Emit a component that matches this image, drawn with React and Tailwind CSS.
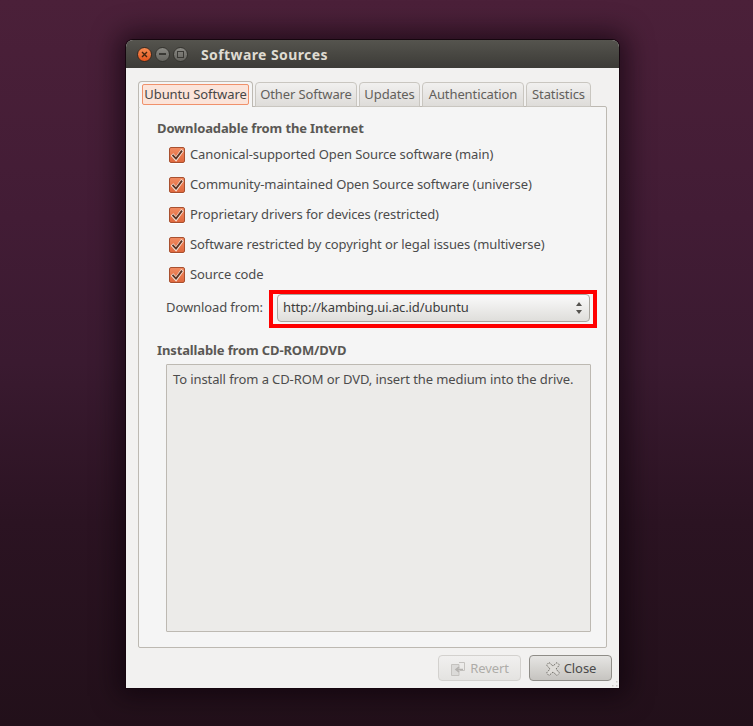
const sources = [
  'Canonical-supported Open Source software (main)',
  'Community-maintained Open Source software (universe)',
  'Proprietary drivers for devices (restricted)',
  'Software restricted by copyright or legal issues (multiverse)',
  'Source code',
];

const tabs = [
  { label: 'Other Software', width: 'w-[102px]' },
  { label: 'Updates', width: 'w-[61px]' },
  { label: 'Authentication', width: 'w-[102px]' },
  { label: 'Statistics', width: 'w-[65px]' },
];

const CheckBox = () => (
  <div className="flex h-[16px] w-[16px] shrink-0 items-center justify-center rounded-[2px] border border-[#a8502f] bg-gradient-to-b from-[#f08a60] to-[#e0693f] shadow-[0_1px_0_#ffffff]">
    <svg width="14" height="14" viewBox="0 0 14 14" fill="none">
      <path d="M2 6.5 L6 11 L12.5 2" stroke="#f6e4da" strokeWidth="3.4" />
      <path d="M2.5 6.8 L6 10.6 L12 2.6" stroke="#5c3424" strokeWidth="1.8" />
    </svg>
  </div>
);

const WindowButtons = () => (
  <div className="flex w-[75px] items-center pl-[11px]">
    <div className="flex h-[15px] w-[15px] items-center justify-center rounded-full border border-[#3a2a20] bg-gradient-to-b from-[#f58a50] to-[#e6551b]">
      <svg width="9" height="9" viewBox="0 0 9 9"><path d="M2 2 L7 7 M7 2 L2 7" stroke="#43250f" strokeWidth="1.4" /></svg>
    </div>
    <div className="ml-[3px] flex h-[15px] w-[15px] items-center justify-center rounded-full border border-[#35342f] bg-gradient-to-b from-[#8a8984] to-[#65645f]">
      <div className="h-[2px] w-[7px] bg-[#3a3935]" />
    </div>
    <div className="ml-[3px] flex h-[15px] w-[15px] items-center justify-center rounded-full border border-[#35342f] bg-gradient-to-b from-[#8a8984] to-[#65645f]">
      <div className="h-[7px] w-[7px] border border-[#3a3935]" />
    </div>
  </div>
);

const RevertIcon = () => (
  <svg width="17" height="16" viewBox="0 0 17 16" fill="none">
    <path d="M1.5 3.5 H9 V14.5 H1.5 Z" fill="#dbdad8" stroke="#c4c2bf" />
    <path d="M9 1.5 H14.5 V9.5 H10" stroke="#c4c2bf" />
    <path d="M13 8.5 H6.5 M9 6 L6 8.5 L9 11" stroke="#b4b2af" strokeWidth="1.6" />
  </svg>
);

const CloseIcon = () => (
  <svg width="16" height="16" viewBox="0 0 16 16">
    <path
      d="M4 1.5 L8 5 L12 1.5 L14.5 4 L11 8 L14.5 12 L12 14.5 L8 11 L4 14.5 L1.5 12 L5 8 L1.5 4 Z"
      fill="#dedcd8"
      stroke="#77756f"
      strokeWidth="1"
      strokeDasharray="2 1"
    />
  </svg>
);

const ResizeGrip = () => (
  <svg className="absolute bottom-[-7px] right-[-7px]" width="8" height="8" viewBox="0 0 8 8" fill="#cfccc7">
    <rect x="5" y="1" width="1.5" height="1.5" />
    <rect x="1" y="5" width="1.5" height="1.5" />
    <rect x="5" y="5" width="1.5" height="1.5" />
  </svg>
);

const App = () => {
  return (
    <div
      className="h-[726px] w-[753px] overflow-hidden bg-[linear-gradient(180deg,#4b2039_0%,#421c35_30%,#3a1a30_50%,#2b1322_72%,#22101a_100%)] pl-[126px] pt-[40px] text-[13px] tracking-[-0.1px] text-[#4c4c4c]"
      style={{ fontFamily: '"Noto Sans", sans-serif' }}
    >
      <div className="flex h-[648px] w-[493px] flex-col overflow-hidden rounded-t-[7px] bg-[#f2f1f0] shadow-[0_0_0_1px_#16060f,0_0_26px_8px_rgba(10,0,8,0.6)]">
        {/* Title bar */}
        <div className="flex h-[28px] shrink-0 items-center bg-gradient-to-b from-[#55544e] to-[#3c3b37]">
          <WindowButtons />
          <span className="text-[14px] font-bold tracking-[0.4px] text-[#dfdbd2]">Software Sources</span>
        </div>

        <div className="flex flex-1 flex-col px-[12px] pt-[13px]">
          {/* Tabs */}
          <div className="relative z-10 -mb-px flex h-[26px] items-end gap-[2px]">
            <div className="flex h-[26px] w-[115px] items-center justify-center rounded-t-[4px] border border-b-0 border-[#bdb9b2] bg-[#f5f5f5]">
              <div className="flex h-[21px] w-[107px] items-center justify-center rounded-[2px] border border-[#f0916b] bg-[#fbe4da] text-[#474747]">
                Ubuntu Software
              </div>
            </div>
            {tabs.map((tab) => (
              <div
                key={tab.label}
                className={`flex h-[25px] items-center justify-center rounded-t-[4px] border border-[#c9c6c0] bg-gradient-to-b from-[#f1f0ef] to-[#dedcd9] text-[#625f5b] ${tab.width}`}
              >
                {tab.label}
              </div>
            ))}
          </div>

          {/* Notebook panel */}
          <div className="flex h-[542px] w-[469px] flex-col rounded-[2px] border border-[#bdb9b2] bg-[#f5f5f5] px-[18px] pt-[11px]">
            <h3 className="h-[20px] font-bold leading-[20px] tracking-[-0.13px] text-[#5a5854]">Downloadable from the Internet</h3>
            <div className="mt-[2px] flex flex-col">
              {sources.map((source) => (
                <div key={source} className="flex h-[30px] items-center gap-[5px] pl-[12px]">
                  <CheckBox />
                  <span className="whitespace-nowrap">{source}</span>
                </div>
              ))}
            </div>

            <div className="flex items-start">
              <span className="mt-[7px] w-[112px] shrink-0 whitespace-nowrap pl-[9px] leading-[20px]">Download from:</span>
              <div className="box-border h-[38px] w-[328px] shrink-0 border-4 border-[#ff0000] pb-[2px] pl-[4px] pr-[3px]">
                <div className="flex h-[28px] items-center justify-between rounded-[4px] border border-[#a9a69f] bg-gradient-to-b from-[#fafafa] to-[#dfdedb] pl-[5px] pr-[6px]">
                  <span className="text-[#3c3c3c]">http://kambing.ui.ac.id/ubuntu</span>
                  <svg width="8" height="14" viewBox="0 0 8 14">
                    <path d="M4 1 L7 5 H1 Z M4 13 L7 9 H1 Z" fill="#55534f" />
                  </svg>
                </div>
              </div>
            </div>

            <h3 className="mt-[12px] h-[20px] font-bold leading-[20px] tracking-[-0.13px] text-[#5a5854]">Installable from CD-ROM/DVD</h3>
            <div className="ml-[9px] mt-[4px] h-[268px] w-[425px] rounded-[1px] border border-[#bdb9b2] bg-[#ecebe9] px-[6px] pt-[4px]">
              <p className="leading-[20px]">To install from a CD-ROM or DVD, insert the medium into the drive.</p>
            </div>
          </div>

          {/* Buttons */}
          <div className="relative -mr-[5px] mt-[7px] flex justify-end gap-[8px]">
            <button className="flex h-[26px] w-[83px] items-center justify-center gap-[3px] rounded-[4px] border border-[#d3d1ce] bg-gradient-to-b from-[#f1f0ef] to-[#e4e3e1] pt-[1px] text-[#aeaca8]">
              <RevertIcon />
              Revert
            </button>
            <button className="flex h-[26px] w-[83px] items-center justify-center gap-[3px] rounded-[4px] border border-[#8f8d88] bg-gradient-to-b from-[#e6e5e3] to-[#c6c4c0] pt-[1px] text-[#4a4a4a]">
              <CloseIcon />
              Close
            </button>
            <ResizeGrip />
          </div>
        </div>
      </div>
    </div>
  );
};

export default App;
